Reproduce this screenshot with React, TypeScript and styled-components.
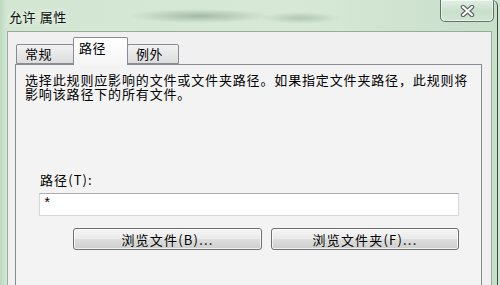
import React from "react";
import styled, { createGlobalStyle } from "styled-components";

const Global = createGlobalStyle`
  html, body { margin: 0; padding: 0; background: #cfe4d0; overflow: hidden; }
  body { font-family: "Noto Sans CJK SC", "Liberation Sans", sans-serif; }
`;

const Window = styled.div`
  box-sizing: border-box;
  width: 498px;
  height: 285px;
  display: flex;
  flex-direction: column;
  border-right: 1px solid #3c5044;
  border-top-right-radius: 6px;
  background:
    radial-gradient(ellipse 70px 7px at 200px 16px, rgba(70,100,80,0.35), transparent),
    radial-gradient(ellipse 40px 6px at 300px 18px, rgba(70,100,80,0.25), transparent),
    linear-gradient(to right, #bcd9be 0px, #d2e6d2 6px, #d7e8d7 60%, #c8dfca 100%);
  overflow: hidden;
`;

const TitleBar = styled.div`
  height: 31px;
  display: flex;
  justify-content: space-between;
  align-items: center;
  padding: 0 3px 0 9px;
  flex: none;
`;

const Title = styled.div`
  font-size: 13px;
  color: #111;
  letter-spacing: 0.6px;
  text-shadow: 0 0 6px rgba(255,255,255,0.9);
  padding-top: 1px;
`;

const CloseButton = styled.div`
  align-self: flex-start;
  box-sizing: border-box;
  width: 54px;
  height: 22px;
  display: flex;
  align-items: center;
  justify-content: center;
  border: 1px solid rgba(55, 75, 65, 0.75);
  border-top: none;
  border-radius: 0 0 5px 5px;
  background: linear-gradient(to bottom, rgba(255,255,255,0.45), rgba(200,222,205,0.35) 55%, rgba(220,235,222,0.5));
  box-shadow: inset 0 0 0 1px rgba(255,255,255,0.55);
`;

const Client = styled.div`
  flex: 1;
  box-sizing: border-box;
  margin-left: 7px;
  width: 485px;
  background: #f0f0f0;
  border: 1px solid #98ab9c;
  border-bottom: none;
  padding: 5px 0 0 7px;
  display: flex;
  flex-direction: column;
`;

const TabStrip = styled.div`
  display: flex;
  align-items: flex-end;
  padding-left: 1px;
  height: 27px;
  flex: none;
  position: relative;
  z-index: 1;
`;

const Tab = styled.div<{ $active?: boolean; $w: number }>`
  box-sizing: border-box;
  width: ${(p) => p.$w}px;
  height: ${(p) => (p.$active ? 28 : 20)}px;
  margin-left: ${(p) => (p.$active ? -1 : 0)}px;
  margin-right: ${(p) => (p.$active ? -1 : 0)}px;
  margin-bottom: ${(p) => (p.$active ? -1 : 0)}px;
  border: 1px solid #898c95;
  border-bottom: ${(p) => (p.$active ? "none" : "1px solid #898c95")};
  border-radius: 2px 2px 0 0;
  background: ${(p) =>
    p.$active
      ? "linear-gradient(to bottom, #ffffff, #f5f5f5)"
      : "linear-gradient(to bottom, #f2f2f2, #dcdcdc)"};
  position: relative;
  z-index: ${(p) => (p.$active ? 2 : 1)};
  font-size: 13px;
  color: #000;
  display: flex;
  align-items: ${(p) => (p.$active ? "flex-start" : "center")};
  padding-left: ${(p) => (p.$active ? 5 : 8)}px;
  padding-top: ${(p) => (p.$active ? 1 : 0)}px;
  line-height: 18px;
  letter-spacing: 0.6px;
`;

const Panel = styled.div`
  flex: 1;
  box-sizing: border-box;
  width: 467px;
  border: 1px solid #898c95;
  border-bottom: none;
  background: #f3f3f3;
  padding: 8px 0 0 9px;
  display: flex;
  flex-direction: column;
`;

const Description = styled.div`
  font-size: 13px;
  line-height: 14px;
  color: #000;
  letter-spacing: 0.85px;
  width: 450px;
`;

const Form = styled.div`
  margin-top: 72px;
  margin-left: 14px;
  display: flex;
  flex-direction: column;
`;

const Label = styled.div`
  font-size: 13px;
  line-height: 14px;
  color: #000;
  padding-left: 1px;
  letter-spacing: 1.1px;
`;

const Input = styled.div`
  box-sizing: border-box;
  margin-top: 6px;
  width: 420px;
  height: 23px;
  background: #fff;
  border: 1px solid #d3d8dd;
  border-top-color: #abadb3;
  font-family: "Liberation Mono", monospace;
  font-size: 14px;
  line-height: 21px;
  padding-left: 3px;
  color: #000;
`;

const ButtonRow = styled.div`
  display: flex;
  gap: 9px;
  margin-top: 12px;
  margin-left: 34px;
`;

const Button = styled.div<{ $w: number }>`
  box-sizing: border-box;
  width: ${(p) => p.$w}px;
  height: 22px;
  border: 1px solid #707070;
  border-radius: 3px;
  background: linear-gradient(to bottom, #f4f4f4 0%, #ebebeb 48%, #dddddd 52%, #cfcfcf 100%);
  box-shadow: inset 0 0 0 1px rgba(255,255,255,0.7);
  font-size: 13px;
  color: #000;
  display: flex;
  align-items: center;
  justify-content: center;
  letter-spacing: 1.2px;
`;

const CloseIcon = () => (
  <svg width="15" height="12" viewBox="0 0 15 12">
    <path d="M3 2 L12 10 M12 2 L3 10" stroke="#5a6460" strokeWidth="4.4" strokeLinecap="round" fill="none" />
    <path d="M3 2 L12 10 M12 2 L3 10" stroke="#ffffff" strokeWidth="2.2" strokeLinecap="round" fill="none" />
  </svg>
);

export default function App() {
  return (
    <>
      <Global />
      <Window>
        <TitleBar>
          <Title>允许 属性</Title>
          <CloseButton>
            <CloseIcon />
          </CloseButton>
        </TitleBar>
        <Client>
          <TabStrip>
            <Tab $w={58}>常规</Tab>
            <Tab $w={55} $active>路径</Tab>
            <Tab $w={52}>例外</Tab>
          </TabStrip>
          <Panel>
            <Description>
              选择此规则应影响的文件或文件夹路径。如果指定文件夹路径，此规则将影响该路径下的所有文件。
            </Description>
            <Form>
              <Label>路径(T):</Label>
              <Input>*</Input>
              <ButtonRow>
                <Button $w={189}>浏览文件(B)...</Button>
                <Button $w={188}>浏览文件夹(F)...</Button>
              </ButtonRow>
            </Form>
          </Panel>
        </Client>
      </Window>
    </>
  );
}
